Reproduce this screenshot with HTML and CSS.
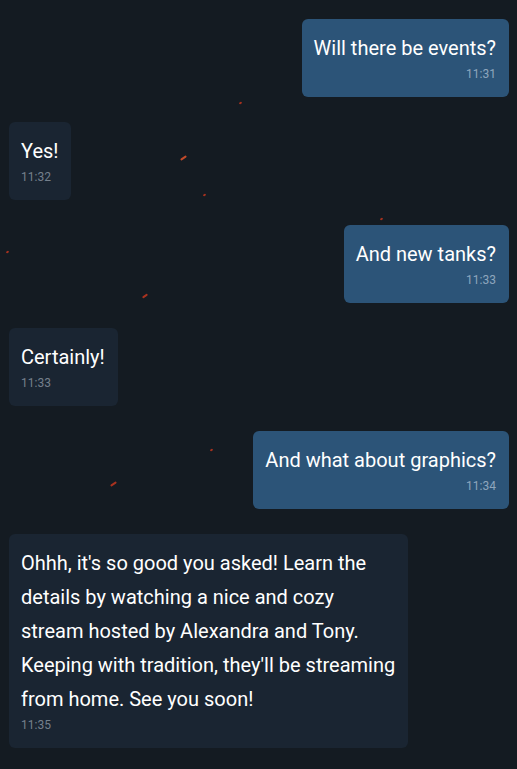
FILE: index.html
```html
<!DOCTYPE html>
<html>
<head>
<meta charset="utf-8">
<link rel="stylesheet" href="styles.css">
</head>
<body>
<div class="sparks">
  <span class="spark s1"></span><span class="spark s2"></span><span class="spark s3"></span>
  <span class="spark s4"></span><span class="spark s5"></span><span class="spark s6"></span>
  <span class="spark s7"></span><span class="spark s8"></span>
</div>
<main class="chat">
  <div class="msg out"><div class="text">Will there be events?</div><div class="time">11:31</div></div>
  <div class="msg in"><div class="text">Yes!</div><div class="time">11:32</div></div>
  <div class="msg out"><div class="text">And new tanks?</div><div class="time">11:33</div></div>
  <div class="msg in"><div class="text">Certainly!</div><div class="time">11:33</div></div>
  <div class="msg out"><div class="text">And what about graphics?</div><div class="time">11:34</div></div>
  <div class="msg in long"><div class="text">Ohhh, it's so good you asked! Learn the details by watching a nice and cozy stream hosted by Alexandra and Tony. Keeping with tradition, they'll be streaming from home. See you soon!</div><div class="time">11:35</div></div>
</main>
</body>
</html>
```
FILE: styles.css
```css
html, body {
  margin: 0;
  background: #141b22;
  height: 100%;
}
body {
  font-family: Roboto, "Noto Sans", sans-serif;
  color: #ffffff;
  position: relative;
  overflow: hidden;
}
.chat {
  display: flex;
  flex-direction: column;
  gap: 25px;
  padding: 19px 8px 0 9px;
}
.msg {
  border-radius: 6px;
  padding: 12px 13px 14px 12px;
  max-width: 374px;
}
.msg.out {
  align-self: flex-end;
  background: #2c5478;
}
.msg.in {
  align-self: flex-start;
  background: #1a2532;
}
.msg.long {
  width: 380px;
  max-width: none;
  padding-right: 7px;
}
.text {
  font-size: 20px;
  line-height: 34px;
  color: #ffffff;
}
.time {
  font-size: 12px;
  line-height: 18px;
}
.out .time {
  text-align: right;
  color: #8ea6bd;
}
.in .time {
  color: #75808c;
}
.sparks {
  position: absolute;
  inset: 0;
  pointer-events: none;
}
.spark {
  position: absolute;
  width: 5px;
  height: 2px;
  border-radius: 1px;
  background: #a8321f;
  transform: rotate(-35deg);
}
.s1 { left: 239px; top: 102px; width: 3px; }
.s2 { left: 180px; top: 157px; width: 7px; background: #c24a2a; }
.s3 { left: 203px; top: 194px; width: 3px; }
.s4 { left: 6px; top: 251px; width: 3px; }
.s5 { left: 142px; top: 295px; width: 6px; }
.s6 { left: 380px; top: 218px; width: 3px; }
.s7 { left: 210px; top: 449px; width: 3px; }
.s8 { left: 110px; top: 483px; width: 7px; }
```
